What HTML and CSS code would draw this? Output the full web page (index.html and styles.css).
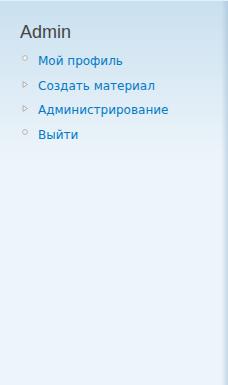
FILE: index.html
```html
<!DOCTYPE html>
<html>
<head>
  <meta name="viewport" content="width=device-width, initial-scale=1">
  <link rel="stylesheet" href="styles.css">
</head>
<body>
  <div class="sidebar">
    <div class="block">
      <h2>Admin</h2>
      <ul class="menu">
        <li class="leaf">
          <svg class="bullet" width="6" height="6" viewBox="0 0 6 6"><circle cx="3" cy="3" r="2.4" fill="#f2f2f2" stroke="#b4b4b4" stroke-width="1"/></svg>
          <a href="#">Мой профиль</a>
        </li>
        <li class="collapsed">
          <svg class="bullet" width="6" height="7" viewBox="0 0 6 7"><path d="M1 0.6 L5.4 3.5 L1 6.4 Z" fill="#f2f2f2" stroke="#aeaeae" stroke-width="1" stroke-linejoin="round"/></svg>
          <a href="#">Создать материал</a>
        </li>
        <li class="collapsed">
          <svg class="bullet" width="6" height="7" viewBox="0 0 6 7"><path d="M1 0.6 L5.4 3.5 L1 6.4 Z" fill="#f2f2f2" stroke="#aeaeae" stroke-width="1" stroke-linejoin="round"/></svg>
          <a href="#">Администрирование</a>
        </li>
        <li class="leaf">
          <svg class="bullet" width="6" height="6" viewBox="0 0 6 6"><circle cx="3" cy="3" r="2.4" fill="#f2f2f2" stroke="#b4b4b4" stroke-width="1"/></svg>
          <a href="#">Выйти</a>
        </li>
      </ul>
    </div>
  </div>
</body>
</html>
```

FILE: styles.css
```css
html, body {
  margin: 0;
  height: 100%;
}
body {
  font-family: "DejaVu Sans", Verdana, sans-serif;
  font-size: 12px;
  background-color: #edf5fa;
}
.sidebar {
  height: 100%;
  box-sizing: border-box;
  padding: 21px 20px 0 20px;
  border-top: 1px solid #e4eff7;
  background:
    linear-gradient(to left, rgba(150, 180, 205, 0.45) 0, rgba(150, 180, 205, 0.12) 5px, rgba(150, 180, 205, 0) 7px),
    linear-gradient(to bottom, #c9e0ef 0, #e0edf6 100px, #edf5fa 160px, #edf5fa 100%);
}
h2 {
  font-family: "Liberation Sans", Arial, sans-serif;
  font-weight: normal;
  font-size: 18px;
  color: #444;
  margin: 0 0 7px 0;
  line-height: 20px;
}
.menu {
  list-style: none;
  margin: 0;
  padding: 0;
}
.menu li {
  display: flex;
  align-items: center;
  height: 24.6px;
}
.bullet {
  flex-shrink: 0;
  margin: 0 10px 6px 2px;
}
.collapsed .bullet {
  margin-bottom: 3px;
}
.menu a {
  color: #027ac6;
  text-decoration: none;
  line-height: 16px;
}
```
